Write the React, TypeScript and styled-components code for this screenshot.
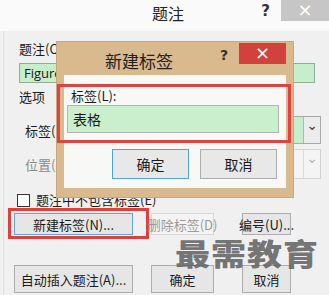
import styled, { createGlobalStyle } from "styled-components";

const GlobalStyle = createGlobalStyle`
  html, body {
    margin: 0;
    padding: 0;
    background: #f0f0f0;
  }
  * {
    box-sizing: border-box;
  }
`;

const FONT = `"Noto Sans CJK SC", "Microsoft YaHei", sans-serif`;

export default function App() {
  return (
    <>
      <GlobalStyle />
      <Window>
        <TitleBar>
          <TitleText>题注</TitleText>
          <HelpMark>?</HelpMark>
          <CloseButton>×</CloseButton>
        </TitleBar>
        <Body>
          <FieldLabel>题注(C):</FieldLabel>
          <CaptionInput>Figure 1</CaptionInput>
          <GroupLabel>选项</GroupLabel>
          <OptionRow>
            <OptionLabel>标签(L):</OptionLabel>
            <Combo>
              <ComboValue>Figure</ComboValue>
              <ComboArrow>⌄</ComboArrow>
            </Combo>
          </OptionRow>
          <OptionRow $top={5}>
            <OptionLabel $disabled>位置(P):</OptionLabel>
            <Combo $disabled>
              <ComboValue />
              <ComboArrow $disabled>⌄</ComboArrow>
            </Combo>
          </OptionRow>
          <CheckRow>
            <CheckBox />
            <span>题注中不包含标签(E)</span>
          </CheckRow>
          <ButtonGrid>
            <Marked>
              <DlgButton $focus>新建标签(N)...</DlgButton>
            </Marked>
            <DlgButton $disabled>删除标签(D)</DlgButton>
            <DlgButton>编号(U)...</DlgButton>
          </ButtonGrid>
          <ButtonGrid $top={30} $height={28}>
            <DlgButton>自动插入题注(A)...</DlgButton>
            <DlgButton>确定</DlgButton>
            <DlgButton>取消</DlgButton>
          </ButtonGrid>
        </Body>

        <NewLabelDialog>
          <DialogTitleBar>
            <DialogTitle>新建标签</DialogTitle>
            <DialogHelp>?</DialogHelp>
            <DialogClose>×</DialogClose>
          </DialogTitleBar>
          <DialogContent>
            <Highlight>
              <InnerLabel>标签(L):</InnerLabel>
              <LabelInput>表格</LabelInput>
            </Highlight>
            <DialogButtons>
              <DialogButton $primary>确定</DialogButton>
              <DialogButton>取消</DialogButton>
            </DialogButtons>
          </DialogContent>
        </NewLabelDialog>

        <Watermark>最需教育</Watermark>
      </Window>
    </>
  );
}

const Window = styled.div`
  position: relative;
  width: 329px;
  height: 295px;
  overflow: hidden;
  background: #f0f0f0;
  font-family: ${FONT};
  color: #1a1a1a;
`;

const TitleBar = styled.div`
  display: flex;
  align-items: flex-start;
  height: 31px;
  background: #fafafa;
`;

const TitleText = styled.div`
  margin-left: 152px;
  margin-top: 3px;
  font-size: 16px;
  line-height: 20px;
  color: #222;
`;

const HelpMark = styled.div`
  margin-left: auto;
  margin-top: 2px;
  font-family: "DejaVu Sans", sans-serif;
  font-weight: bold;
  font-size: 15px;
  line-height: 18px;
  color: #333;
  margin-right: 11px;
`;

const CloseButton = styled.div`
  width: 48px;
  height: 21px;
  background: #c6c6c6;
  color: #fff;
  font-family: "DejaVu Sans", sans-serif;
  font-size: 18px;
  line-height: 20px;
  text-align: center;
`;

const Body = styled.div`
  display: flex;
  flex-direction: column;
  height: 264px;
  margin-left: 3px;
  border-left: 1px solid #dedede;
  padding-left: 15px;
  font-size: 13px;
`;

const FieldLabel = styled.div`
  margin-top: 9px;
  line-height: 18px;
`;

const CaptionInput = styled.div`
  margin-top: 5px;
  width: 296px;
  height: 20px;
  background: #c8edcc;
  border: 1px solid #8fae93;
  padding-left: 4px;
  font-family: "Open Sans", sans-serif;
  font-size: 13px;
  line-height: 18px;
`;

const GroupLabel = styled.div`
  margin-top: 5px;
  line-height: 18px;
`;

const OptionRow = styled.div<{ $top?: number }>`
  display: flex;
  align-items: center;
  margin-top: ${(p) => p.$top ?? 10}px;
  padding-left: 6px;
`;

const OptionLabel = styled.div<{ $disabled?: boolean }>`
  width: 70px;
  color: ${(p) => (p.$disabled ? "#8a8a8a" : "#1a1a1a")};
`;

const Combo = styled.div<{ $disabled?: boolean }>`
  display: flex;
  width: 226px;
  height: ${(p) => (p.$disabled ? 30 : 28)}px;
  border: 1px solid ${(p) => (p.$disabled ? "#d3d3d3" : "#a9a9a9")};
  background: ${(p) => (p.$disabled ? "#f4f4f4" : "#c8edcc")};
`;

const ComboValue = styled.div`
  flex: 1;
  padding-left: 4px;
`;

const ComboArrow = styled.div<{ $disabled?: boolean }>`
  width: 17px;
  border-left: 1px solid ${(p) => (p.$disabled ? "#dadada" : "#b5b5b5")};
  background: ${(p) => (p.$disabled ? "#f4f4f4" : "#ececec")};
  color: ${(p) => (p.$disabled ? "#b8b8b8" : "#444")};
  font-family: "DejaVu Sans", sans-serif;
  font-size: 14px;
  line-height: 16px;
  text-align: center;
`;

const CheckRow = styled.div`
  display: flex;
  align-items: center;
  gap: 6px;
  margin-top: 13px;
  margin-left: -2px;
  line-height: 16px;
`;

const CheckBox = styled.div`
  width: 13px;
  height: 13px;
  border: 1px solid #333;
  background: #fff;
`;

const ButtonGrid = styled.div<{ $top?: number; $height?: number }>`
  display: grid;
  grid-template-columns: 119px 81px 77px;
  margin-top: ${(p) => p.$top ?? 5}px;
  margin-left: -5px;
  height: ${(p) => p.$height ?? 22}px;
  & > :nth-child(2) {
    margin-left: 18px;
  }
  & > :nth-child(3) {
    margin-left: 28px;
  }
`;

/* hand-drawn red annotation around a button; negative margins keep the grid in place */
const Marked = styled.div`
  display: flex;
  margin: -5px -16px -4px -6px;
  padding: 2px 13px 1px 3px;
  border: 3px solid #e0403c;
  & > * {
    flex: 1;
  }
`;

const DlgButton = styled.div<{ $focus?: boolean; $disabled?: boolean }>`
  display: flex;
  align-items: center;
  justify-content: center;
  border: 1px solid ${(p) => (p.$focus ? "#5fa6e0" : p.$disabled ? "#d8d8d8" : "#adadad")};
  background: ${(p) => (p.$disabled ? "#f4f4f4" : "#e6e6e6")};
  color: ${(p) => (p.$disabled ? "#9a9a9a" : "#1a1a1a")};
  font-size: 13px;
  white-space: nowrap;
`;

const NewLabelDialog = styled.div`
  position: absolute;
  left: 57px;
  top: 42px;
  width: 236px;
  height: 155px;
  display: flex;
  flex-direction: column;
  background: #d9b98e;
  padding: 0 7px 9px 7px;
  box-shadow: 0 0 0 1px #c9a77a;
`;

const DialogTitleBar = styled.div`
  display: flex;
  align-items: flex-start;
  height: 33px;
  margin-right: -7px;
`;

const DialogTitle = styled.div`
  margin-left: 41px;
  margin-top: 8px;
  font-size: 17px;
  line-height: 22px;
  color: #222;
`;

const DialogHelp = styled.div`
  margin-left: auto;
  margin-top: 4px;
  margin-right: 11px;
  font-family: "DejaVu Sans", sans-serif;
  font-weight: bold;
  font-size: 14px;
  line-height: 18px;
  color: #333;
`;

const DialogClose = styled.div`
  width: 47px;
  height: 21px;
  margin-top: 1px;
  margin-right: 7px;
  background: #d2413d;
  color: #fff;
  font-family: "DejaVu Sans", sans-serif;
  font-size: 18px;
  line-height: 20px;
  text-align: center;
`;

const DialogContent = styled.div`
  flex: 1;
  display: flex;
  flex-direction: column;
  background: #f8f8f6;
  font-size: 13px;
`;

const Highlight = styled.div`
  display: flex;
  flex-direction: column;
  margin: 9px -5px 0 -7px;
  padding: 0 9px 7px 7px;
  border: 3px solid #e2413e;
`;

const InnerLabel = styled.div`
  margin-left: 4px;
  line-height: 18px;
`;

const LabelInput = styled.div`
  height: 28px;
  background: #c9efcc;
  border: 1px solid #b4b4b4;
  padding-left: 5px;
  font-size: 14px;
  line-height: 26px;
`;

const DialogButtons = styled.div`
  display: flex;
  justify-content: flex-end;
  gap: 11px;
  margin-top: 6px;
  padding-right: 9px;
`;

const DialogButton = styled.div<{ $primary?: boolean }>`
  width: 77px;
  height: 30px;
  display: flex;
  align-items: center;
  justify-content: center;
  border: 1px solid ${(p) => (p.$primary ? "#4aa3df" : "#adadad")};
  background: #e8e8e8;
  font-size: 14px;
`;

const Watermark = styled.div`
  position: absolute;
  left: 175px;
  top: 233px;
  font-family: ${FONT};
  font-weight: 900;
  font-size: 35px;
  line-height: 38px;
  letter-spacing: 1px;
  color: rgba(95, 95, 95, 0.85);
  transform: scaleY(0.85);
  pointer-events: none;
`;
